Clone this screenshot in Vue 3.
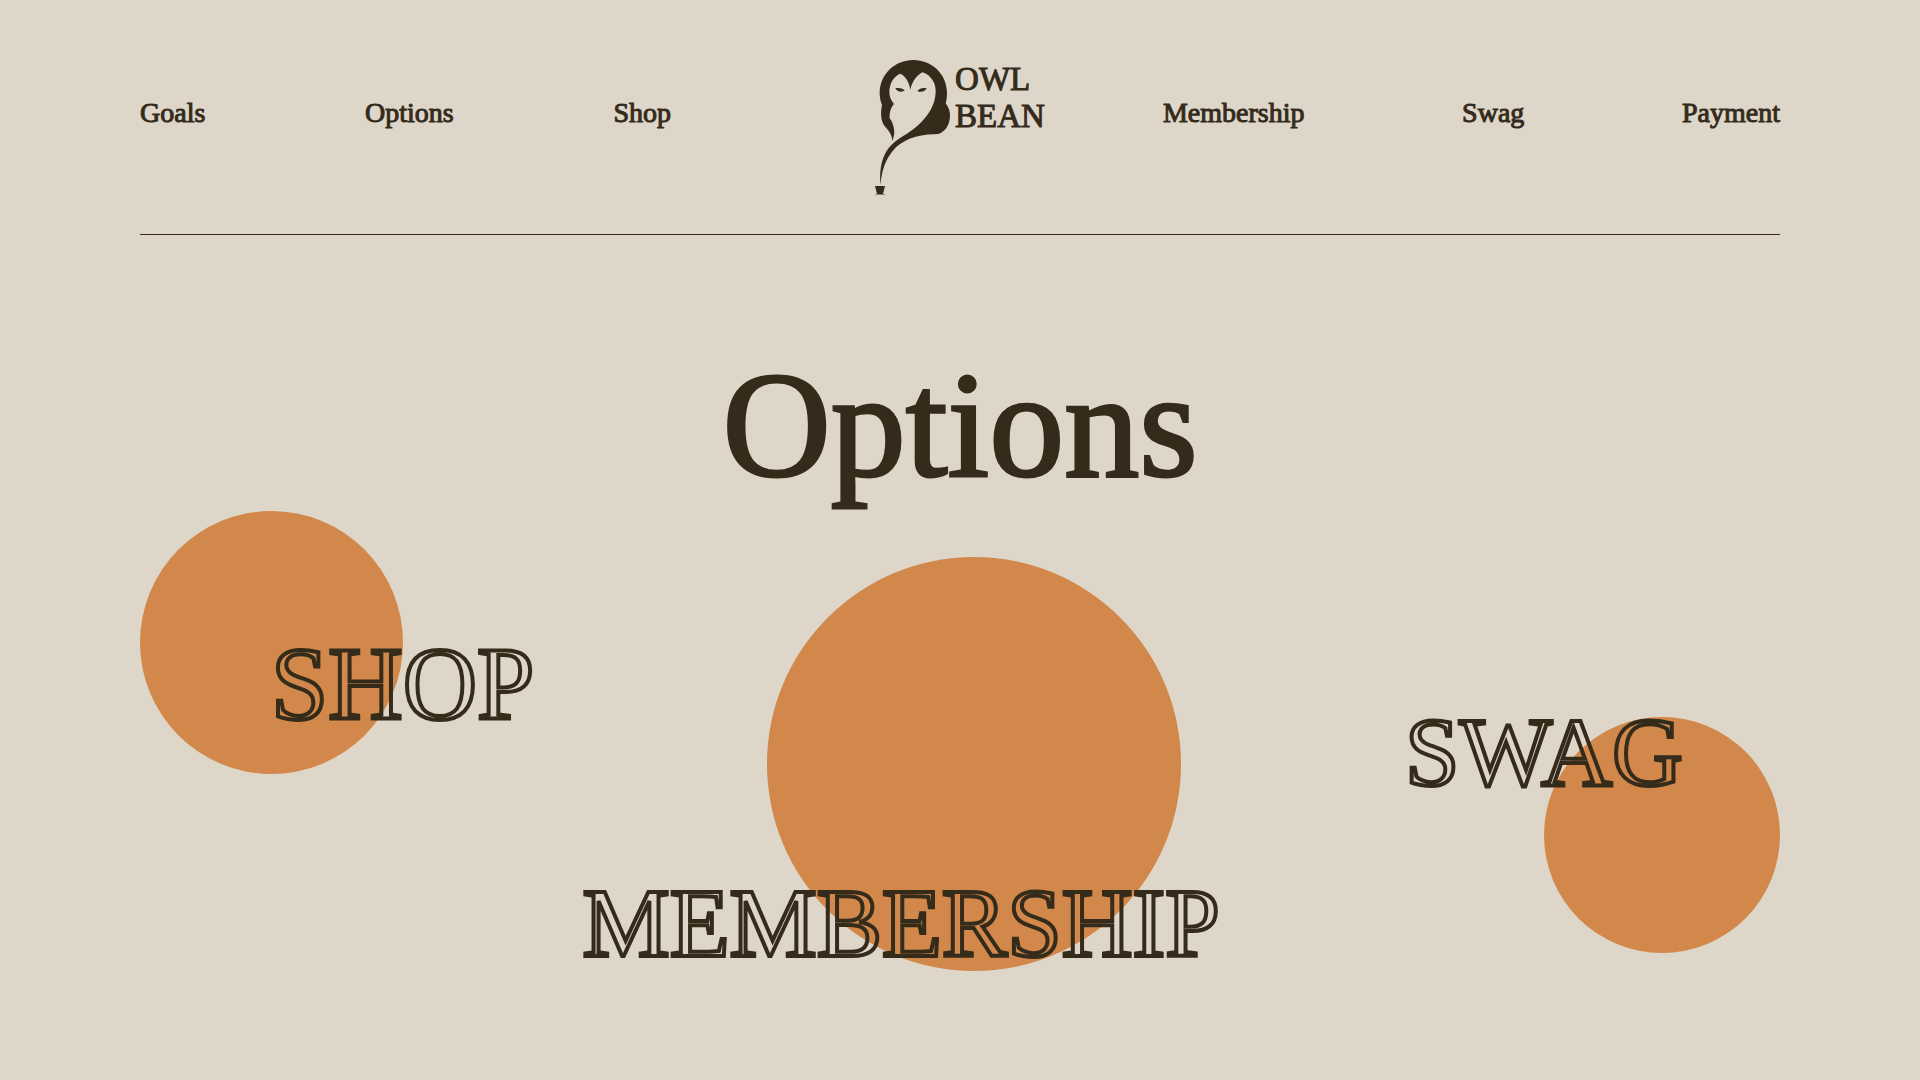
<script setup>
const leftLinks = ['Goals', 'Options', 'Shop']
const rightLinks = ['Membership', 'Swag', 'Payment']
const options = ['Shop', 'Membership', 'Swag']
</script>

<template>
  <div class="page">
    <header class="header">
      <nav class="nav nav-left" aria-label="Primary">
        <a v-for="link in leftLinks" :key="link" :href="'#' + link.toLowerCase()">{{ link }}</a>
      </nav>
      <a class="logo" href="#home">
        <svg class="owl" viewBox="45 30 228 405" aria-hidden="true">
          <path
            d="M160 30C215 30 261 72 261 128C261 140 260 150 257 160C266 172 271 185 270 200C268 232 248 254 222 253C170 254 125 270 98 303C75 332 65 362 62 404C58 370 62 335 78 306C95 277 125 262 147 247C190 218 227 175 227 123C227 98 212 75 188 67C172 74 157 92 151 119C147 94 136 78 121 71C102 78 88 100 88 126C88 140 93 152 102 162C93 172 88 185 89 205C99 217 103 235 103 250L98 273C95 255 88 244 77 232C64 218 60 195 66 165C60 150 59 138 59 128C60 72 105 30 160 30Z"
          />
          <path d="M106 115C116 112 128 114 134 121C126 128 112 127 106 115Z" />
          <path d="M200 115C190 112 178 115 172 123C182 128 194 126 200 115Z" />
          <path d="M45 408H75L69 432H51Z" />
          <path class="saucer" d="M46 432H75V435H46Z" />
        </svg>
        <span class="wordmark">OWL<br />BEAN</span>
      </a>
      <nav class="nav nav-right" aria-label="Secondary">
        <a v-for="link in rightLinks" :key="link" :href="'#' + link.toLowerCase()">{{ link }}</a>
      </nav>
    </header>

    <main>
      <h1>Options</h1>
      <div class="options">
        <a
          v-for="option in options"
          :key="option"
          class="circle"
          :class="option.toLowerCase()"
          :href="'#' + option.toLowerCase()"
        >
          <span class="label">{{ option.toUpperCase() }}</span>
        </a>
      </div>
    </main>
  </div>
</template>

<style>
body {
  background: #ded6c9;
}
</style>

<style scoped>
.page {
  padding: 60px 140px 0;
  color: #352b1b;
  font-family: "Liberation Serif", "Times New Roman", serif;
}

a {
  color: inherit;
  text-decoration: none;
}

.header {
  display: grid;
  grid-template-columns: 1fr auto 1fr;
  align-items: start;
  padding-bottom: 39px;
  border-bottom: 1px solid #3a2820;
}

.nav {
  display: flex;
  justify-content: space-between;
  padding-top: 35px;
  font-size: 28px;
  line-height: 36px;
  -webkit-text-stroke: 1px #352b1b;
}

.nav-left {
  padding-right: 204px;
}

.nav-right {
  padding-left: 118px;
}

.logo {
  display: flex;
  align-items: flex-start;
  gap: 4px;
}

.owl {
  width: 76px;
  height: 135px;
  fill: #352b1b;
}

.saucer {
  opacity: 0.5;
}

.wordmark {
  padding-top: 1px;
  font-size: 33px;
  line-height: 37px;
  -webkit-text-stroke: 1px #352b1b;
}

h1 {
  margin: 110px 0 0;
  font-size: 150px;
  font-weight: 400;
  line-height: 160px;
  text-align: center;
  -webkit-text-stroke: 3px #352b1b;
}

.options {
  display: flex;
  justify-content: space-between;
  align-items: flex-start;
}

.circle {
  position: relative;
  border-radius: 50%;
  background: #d1884a;
}

.shop {
  width: 263px;
  height: 263px;
  margin-top: 6px;
}

.membership {
  width: 414px;
  height: 414px;
  margin-top: 52px;
}

.swag {
  width: 236px;
  height: 236px;
  margin-top: 212px;
}

.label {
  position: absolute;
  font-size: 98px;
  line-height: 98px;
  white-space: nowrap;
  color: transparent;
  -webkit-text-stroke: 4px #352b1b;
}

.shop .label {
  top: 124px;
  left: 131px;
  font-size: 103px;
}

.membership .label {
  top: 317px;
  left: -184px;
}

.swag .label {
  top: -14px;
  left: -139px;
}
</style>
